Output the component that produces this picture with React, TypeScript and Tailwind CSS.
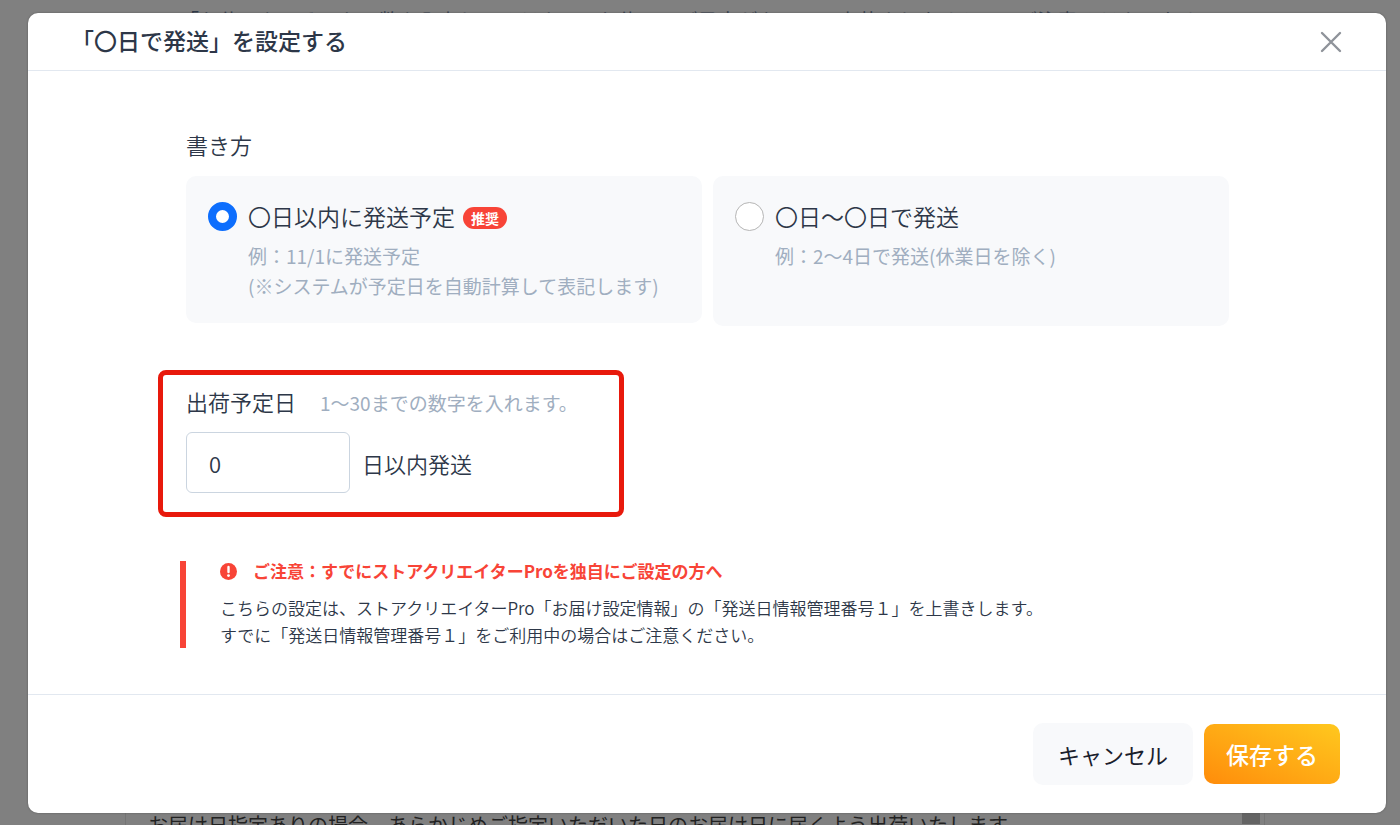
import React, { useState } from 'react';

interface MethodOptionProps {
  value: string;
  label: string;
  badge?: string;
  notes: string[];
  checked: boolean;
  className?: string;
  onSelect: (value: string) => void;
}

const MethodOption: React.FC<MethodOptionProps> = ({
  value,
  label,
  badge,
  notes,
  checked,
  className = '',
  onSelect,
}) => {
  return (
    <label
      className={`flex flex-1 items-start gap-[11px] rounded-[10px] bg-[#f8f9fb] px-[22px] pt-[26px] pb-[22px] ${className}`}
    >
      <input
        type="radio"
        name="method"
        value={value}
        checked={checked}
        onChange={() => onSelect(value)}
        className="size-[29px] shrink-0 appearance-none rounded-full border border-[#b5b5b5] bg-white checked:border-8 checked:border-[#0d6efd]"
      />
      <span className="flex flex-col">
        <span className="flex items-center gap-2 text-[23px] leading-7 font-[350]">
          {label}
          {badge && (
            <span className="mt-1 rounded-full bg-[#f84437] px-2 text-[14px] leading-[22px] font-bold text-white">
              {badge}
            </span>
          )}
        </span>
        <span className="mt-[11px] text-[19px] leading-[30px] text-[#a0aec0]">
          {notes.map((note) => (
            <span key={note} className="block">
              {note}
            </span>
          ))}
        </span>
      </span>
    </label>
  );
};

const App: React.FC = () => {
  const [method, setMethod] = useState('within');
  const [days, setDays] = useState('0');

  return (
    <div className="relative flex h-screen flex-col overflow-hidden bg-[#808080] pt-[13px] pr-3.5 pb-3 pl-7 font-['Noto_Sans_CJK_JP',sans-serif] text-[#2d3748]">
      {/* page behind the dialog */}
      <p className="absolute top-[9px] left-[179px] text-[20px] leading-6 whitespace-nowrap">
        「お休日をのぞいた日数を入力してください。お休みのご予定がある日は出荷されませんのでご注意くださいませ。
      </p>
      <div className="absolute top-[700px] left-[125px] h-[140px] w-[1140px] border-x border-[#747474]">
        <p className="absolute top-[113px] left-[22px] text-[20px] leading-6 whitespace-nowrap text-[#222]">
          お届け日指定ありの場合、あらかじめご指定いただいた日のお届け日に届くよう出荷いたします
        </p>
        <div className="absolute right-1 bottom-4 h-6 w-[18px] bg-[#646464]" />
      </div>

      <div
        role="dialog"
        aria-labelledby="dialog-title"
        className="relative flex flex-1 flex-col rounded-[10px] bg-white shadow-[0_0_2px_#555]"
      >
        <header className="flex h-[58px] items-center justify-between border-b border-[#e2e8f0] pr-11 pl-[43px]">
          <h1 id="dialog-title" className="pb-1 text-[23px] leading-8 font-medium">
            「〇日で発送」を設定する
          </h1>
          <button type="button" aria-label="閉じる" className="text-[#8f939a]">
            <svg
              viewBox="0 0 22 22"
              className="size-[22px]"
              fill="none"
              stroke="currentColor"
              strokeWidth="2.4"
              strokeLinecap="round"
            >
              <path d="M2 2l18 18M20 2L2 20" />
            </svg>
          </button>
        </header>

        <main className="flex-1 pt-[57px] pr-[157px] pl-[158px]">
          <h2 className="text-[22px] leading-8 font-[350]">書き方</h2>
          <div className="mt-4 flex items-start gap-[11px]">
            <MethodOption
              value="within"
              label="〇日以内に発送予定"
              badge="推奨"
              notes={['例：11/1に発送予定', '(※システムが予定日を自動計算して表記します)']}
              checked={method === 'within'}
              onSelect={setMethod}
            />
            <MethodOption
              value="range"
              label="〇日〜〇日で発送"
              notes={['例：2〜4日で発送(休業日を除く)']}
              checked={method === 'range'}
              className="min-h-[150px]"
              onSelect={setMethod}
            />
          </div>

          <div className="mt-11 -ml-7 w-[466px] rounded-lg border-[5px] border-[#e8190c] px-[23px] pt-2.5 pb-[19px]">
            <div className="flex items-baseline gap-6">
              <label htmlFor="days" className="text-[22px] leading-8 font-[350]">
                出荷予定日
              </label>
              <span className="text-[19px] leading-8 text-[#a0aec0]">
                1〜30までの数字を入れます。
              </span>
            </div>
            <div className="mt-[13px] flex items-center gap-3">
              <input
                id="days"
                type="text"
                value={days}
                onChange={(e) => setDays(e.target.value)}
                className="h-[61px] w-[164px] rounded-md border border-[#cbd5e0] px-[22px] text-[22px] font-[350]"
              />
              <span className="text-[22px] leading-8 font-[350]">日以内発送</span>
            </div>
          </div>

          <div className="mt-11 -ml-1.5 border-l-[6px] border-[#f84437] pl-[34px]">
            <p className="flex items-center gap-4 text-[17px] leading-5 font-bold text-[#f84437]">
              <svg viewBox="0 0 17 17" className="size-[17px]" aria-hidden="true">
                <circle cx="8.5" cy="8.5" r="8.5" fill="#f84437" />
                <path d="M8.5 4v5" stroke="#fff" strokeWidth="2.4" strokeLinecap="round" />
                <circle cx="8.5" cy="12.6" r="1.4" fill="#fff" />
              </svg>
              ご注意：すでにストアクリエイターProを独自にご設定の方へ
            </p>
            <p className="mt-[13px] text-[17px] leading-[27px] font-[350]">
              こちらの設定は、ストアクリエイターPro「お届け設定情報」の「発送日情報管理番号１」を上書きします。
              <br />
              すでに「発送日情報管理番号１」をご利用中の場合はご注意ください。
            </p>
          </div>
        </main>

        <footer className="flex h-[119px] items-center justify-end gap-[11px] border-t border-[#e2e8f0] pr-[46px]">
          <button
            type="button"
            className="h-[62px] rounded-[10px] bg-[#f8f9fb] px-[25px] text-[22px] text-[#1a202c]"
          >
            キャンセル
          </button>
          <button
            type="button"
            className="h-[60px] rounded-[10px] bg-linear-to-tr from-[#ff8c0a] to-[#ffc81e] px-[22px] text-[23px] font-medium text-white"
          >
            保存する
          </button>
        </footer>
      </div>
    </div>
  );
};

export default App;
